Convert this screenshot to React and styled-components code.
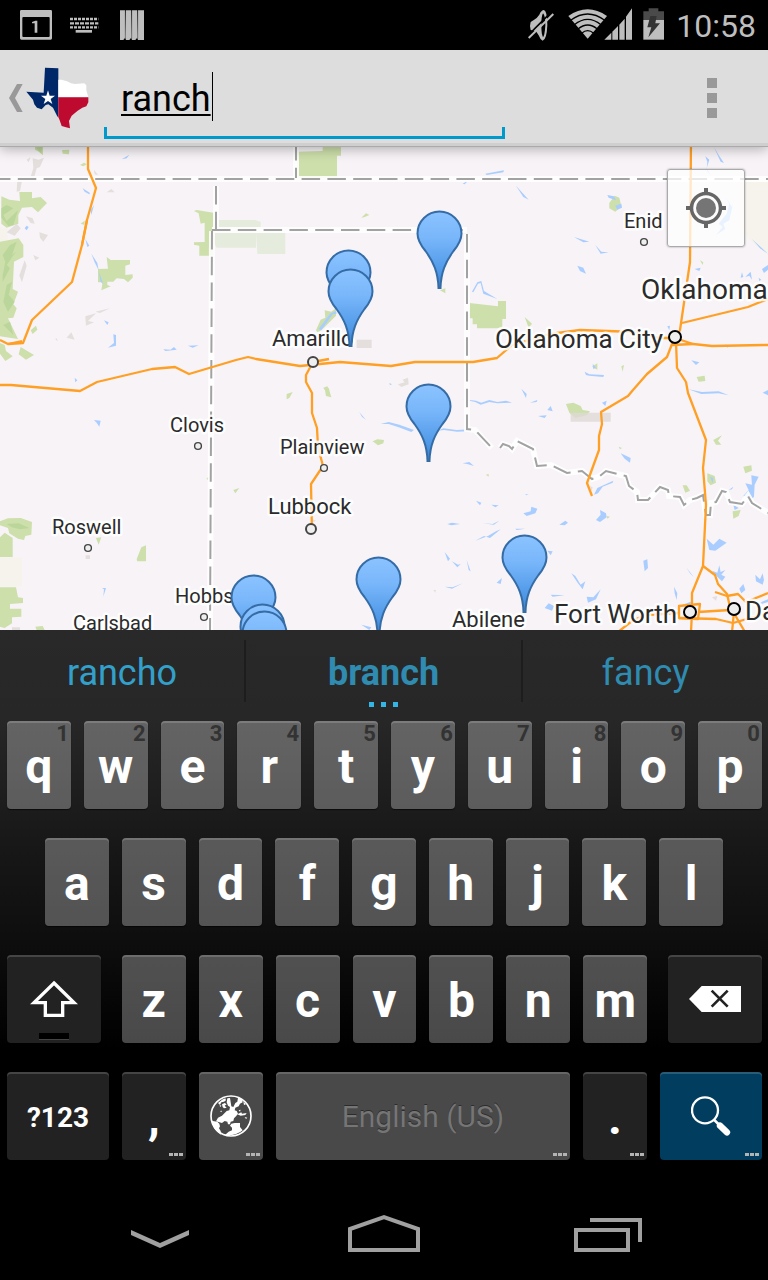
import { useState } from "react";
import styled, { createGlobalStyle } from "styled-components";

const hints = "1234567890";

const cities = [
  { name: "Enid", x: 624, y: 228, size: 20, dot: [644, 242, 3] },
  { name: "Clovis", x: 170, y: 432, size: 20, dot: [198, 446, 3] },
  { name: "Roswell", x: 52, y: 534, size: 20, dot: [88, 548, 3] },
  { name: "Hobbs", x: 175, y: 603, size: 20, dot: [204, 617, 3] },
  { name: "Plainview", x: 280, y: 454, size: 20, dot: [324, 468, 3] },
  { name: "Carlsbad", x: 73, y: 630, size: 20 },
  { name: "Abilene", x: 452, y: 627, size: 22 },
  { name: "Amarillo", x: 272, y: 346, size: 22, dot: [313, 362, 5] },
  { name: "Lubbock", x: 268, y: 514, size: 22, dot: [311, 529, 5] },
  { name: "Oklahoma City", x: 495, y: 348, size: 26, dot: [675, 337, 6] },
  { name: "Fort Worth", x: 554, y: 623, size: 26, dot: [690, 612, 6] },
  { name: "Dallas", x: 745, y: 620, size: 26, dot: [734, 609, 6] },
  { name: "Oklahoma", x: 641, y: 299, size: 28 },
];

const pins = [
  { x: 439, y: 210 },
  { x: 348, y: 249 },
  { x: 350, y: 268 },
  { x: 428, y: 383 },
  { x: 524, y: 534 },
  { x: 378, y: 556 },
  { x: 253, y: 574 },
  { x: 262, y: 603 },
  { x: 264, y: 610 },
];

const roads = [
  "M88 140V169L96 188L87 220L82 245L72 282L32 320L23 343L8 344L0 340",
  "M8 344L22 341M82 245L87 220",
  "M0 385H11L80 391L97 382L152 369L175 367L189 374L236 360L248 357L256 359L300 366L340 362L391 366L415 362H473L497 358L512 345L550 334L580 330L635 332L660 338L675 338L693 344L712 346L765 345H768",
  "M672 345L693 344M313 362L329 359",
  "M682 323L748 307L768 299",
  "M691 140L690 262L680 330L672 344L667 357L647 374L633 390L628 396L601 412L602 424L599 436V450L591 472L587 483L592 496",
  "M676 342L677 368L686 382L688 393L706 440L703 468L706 505L703 566L692 593V612L691 632",
  "M703 566L715 575L718 584L727 594L730 607L735 615L745 632",
  "M679 606L700 604L698 619L679 618ZM698 612L730 610",
  "M618 632L632 621L645 615L679 613M679 618L716 619L733 623L768 613",
  "M715 592L727 596L738 594L746 602L768 593M734 612L732 632",
  "M313 362L306 375V382L312 393V413L317 428L318 447L323 466L311 484L312 534",
];

const borders = [
  "M-8 179H768",
  "M296 142V178",
  "M216 186V230",
  "M212 231L210 630",
  "M212 230H467",
  "M467 234V429L475 430L492 448",
  "M500 448L503 444L509 446L512 449L517 441L533 449L537 466L551 465L567 473L582 471L592 479L600 476L606 471L621 475L626 476L629 486L637 492L638 500L648 500L660 487L668 490L669 496L680 497L684 505L690 500L697 498L703 495L706 515L710 515L711 503L716 502L722 491L726 492L730 502L742 504L748 496L752 503L768 513",
];

// terrain is split in tiles, each drawn at three units per pixel
const tiles = [
  {
    x: 0,
    y: 145,
    park: [
      "M105 3H129V31L116 20L105 14ZM186 15L208 14L207 28L188 26ZM240 60L252 53L261 58L250 64ZM58 141H96V160L122 156L141 174L114 202L96 186L66 188L55 210V236L20 248L4 236V154L28 164L60 168ZM0 290L56 280L70 300V336L42 350L38 432L54 440L40 478L50 490L40 518L24 520L54 582L0 574Z",
      "M0 594L14 600L18 618L38 634L16 648L0 626ZM62 606L102 630L78 644L56 628ZM92 556L108 542L112 554L98 567ZM320 336L332 345H390V358L376 362V390L398 388V398L384 412L372 402L350 400L340 410H322V420L332 424L304 436L308 412H294V372L324 371ZM582 198L590 195L640 203V332H598V302L582 299V292L614 291V233L602 236L596 205ZM242 236L254 227L254 240Z",
    ],
    pale: ["M652 225H768V250H640V240ZM640 262H768V308H650L640 290Z"],
    cream: ["M0 246L22 252V288L0 290Z"],
    ridge: [
      "M98 40L116 44L132 38L120 66L110 70L102 98L92 96L100 70ZM80 44L92 36L86 52ZM52 106L66 108L60 138L50 140ZM20 262L50 236L62 250L44 272ZM78 214L98 220L104 236L92 234ZM118 262L144 270L130 290L120 278ZM58 392L74 346L80 362L66 412ZM100 330L118 338L106 346ZM256 514L288 505L264 528L282 532L258 542ZM286 500L330 490L300 504ZM200 578L214 562L224 584ZM168 578L174 588L167 584ZM320 142L334 132L344 142ZM282 74L294 90L284 88Z",
    ],
    shade: ["M20 180L40 190L10 210L20 228L54 196L40 240L26 244L4 218V190ZM30 300L50 290L36 330L48 320L20 360L30 370L8 410V390L16 350L8 330ZM20 420L36 410L26 450L44 470L24 500L10 470ZM10 540L30 530L40 570ZM108 8L126 6L124 26Z"],
    water: ["M365 43L388 29L380 40ZM248 130L270 144L268 148L254 140ZM272 196L282 180L274 210ZM256 282L268 302L262 306ZM274 326L292 354L296 376L284 352ZM296 378L310 418L302 410ZM74 250L80 242L86 246L80 256ZM312 526L326 532L322 540ZM340 568L348 570L348 602L324 608L342 594ZM490 613L512 614L522 606L530 614L496 618ZM564 602L596 601L578 608ZM224 698L232 706L226 712Z"],
  },
  {
    x: 256,
    y: 145,
    park: ["M124 20L200 18V4H255V32H243V98H124ZM316 218L330 205L340 210L326 216ZM640 474L726 484V468H750V522H739V550H663V538H650V520H640ZM180 556L194 524L208 518L206 496L226 500L240 490V512L206 546L186 564ZM552 436L568 430L568 445ZM202 728L214 724L220 735H206Z"],
    pale: ["M0 226L14 230V250H0ZM0 263H88V327H4Z"],
    ridge: ["M302 584H347V609H302ZM440 704L456 698L458 718L436 726L426 718L446 712Z"],
    water: ["M188 552L222 506L240 498L242 506L230 508L196 556ZM688 86L744 76L742 82L692 90ZM620 116L638 106L626 118ZM400 714L408 718L402 720ZM648 440L664 412L676 408L684 438L724 462L682 446L674 414L666 416L652 442Z"],
  },
  {
    x: 512,
    y: 145,
    park: ["M292 174L308 152L322 158L328 184L310 200L292 190ZM38 516L60 536L50 548ZM240 665L256 655L256 674ZM554 696L578 692L580 708L560 710ZM328 664L336 660L332 680ZM564 346L574 352L572 360Z"],
    cream: ["M680 105H768V330L730 300L680 250Z"],
    water: ["M286 150L306 154L312 166L290 158ZM310 182L328 176L330 188L316 194ZM12 122L50 164L34 156ZM186 276L232 290L214 292ZM250 300L268 320L290 322L266 326ZM196 362L214 368L222 386L204 378ZM606 6L620 30L636 54L626 50L614 24ZM580 34L592 44L584 70L596 90L584 76L586 50ZM612 270L640 252L634 236L652 226L668 154L660 186L650 170L636 150L652 176L644 206L620 236L632 246L604 280ZM720 282L768 326L744 310ZM548 372L566 368L562 378ZM686 398L690 382L694 396ZM700 396L716 380L720 404L712 392ZM750 372L768 360V374L756 384ZM740 398L748 404L742 408ZM218 680L232 688L276 690L274 696L232 692L222 690ZM242 656L252 668L244 672ZM538 646L562 652L552 660ZM466 544L474 542L472 556ZM640 598L652 604L646 608Z"],
  },
  {
    x: 0,
    y: 388,
    park: ["M0 400L24 391L62 390L96 402L94 440L76 444L72 456L54 452L28 436L24 420L0 412ZM0 448L14 434L38 450V507H0ZM0 598H48L54 628L69 630V645L30 648V662H64V686L36 688V706L14 720L0 716ZM106 716L128 714L134 726H110ZM410 514L424 478L438 472V520H412ZM288 450L304 448L296 470ZM286 422L300 402L302 420ZM700 306L718 300L706 316ZM620 270L632 266L622 276Z"],
    cream: ["M0 508H66V596H0Z"],
    ridge: ["M257 502L270 502V513H257ZM36 718H60V726H36Z"],
    shade: ["M20 408L56 406L88 420L60 424L36 418Z"],
    water: ["M282 96L302 98L298 116L290 104ZM306 600L318 600L310 626L312 604Z"],
  },
  {
    x: 256,
    y: 388,
    park: ["M92 18L110 12L100 30L92 34ZM206 0H218L226 28L210 24ZM350 160L364 154L384 156L382 166L366 172ZM690 260L698 258L698 266Z"],
    ridge: ["M532 606L540 606L538 614ZM166 392L180 398L168 404Z"],
    water: ["M374 108L398 102L430 110L474 126L466 132L428 118L398 108ZM546 128L562 121L602 126L640 124L636 130L604 131L564 126ZM620 34L660 38L676 44L700 36L724 42L750 38L768 44L724 46L700 42L674 50L658 42ZM620 226L640 222L654 234L634 228ZM660 338L676 344L672 352ZM706 350L728 352L718 358ZM574 408L588 404L612 408L586 412ZM680 406L710 408L730 398L714 410ZM658 458L684 444L702 450L734 424L720 430L696 444ZM566 492L582 512L576 520ZM588 520L606 530L614 528L604 538ZM632 516L644 550L638 546ZM566 596L590 598L620 586L588 602ZM722 584L738 570L734 588ZM316 710L346 718L340 726ZM310 72L330 96L318 86Z"],
  },
  {
    x: 512,
    y: 388,
    park: ["M162 48L184 44L206 54L212 66L234 70L224 82L190 90L172 74ZM604 156L630 142L618 158L628 170L612 170ZM694 236L718 232L720 248L700 256ZM586 256L608 264L612 284L596 292L586 280ZM512 292L524 292L534 308L520 314ZM662 370L686 366L680 384L664 392ZM320 176L330 180L324 184ZM284 384L294 386L286 392Z"],
    ridge: ["M176 74H296V101H176ZM600 628L616 624L612 638ZM234 294L242 298L238 310Z"],
    water: ["M28 2L44 18L42 30ZM54 44L76 36L74 42ZM78 84L104 82L98 90ZM106 66L116 54L122 70ZM270 44L284 38L280 54ZM196 98L212 118L204 108ZM326 196L356 210L354 224L338 212ZM34 376L56 370L58 356L76 362L70 376L44 384ZM142 410L160 398L168 404L158 412ZM252 396L266 380L264 366L282 376L284 388L264 402ZM246 320L256 300L304 278L302 284L272 296L258 316ZM394 518L406 514L408 540L398 550ZM584 452L604 470L622 452L644 464L610 488L592 486ZM600 548L616 554L622 532L626 552L640 546L628 560L640 566L630 580L616 566ZM730 560L744 574L752 556L756 576L752 590L732 580ZM524 540L546 568L534 556ZM486 596L496 616L494 636L488 616ZM178 556L190 564L206 590L220 580L212 604L198 586ZM224 626L244 628L266 604L252 634L228 644ZM98 660L110 646L126 654L120 668ZM116 620L158 622L122 626ZM740 646L768 634V642L748 648ZM512 650L540 640L526 660ZM530 4L570 12L620 10L650 22L620 16L568 18ZM694 324L710 306L700 286L720 290L718 262L740 266L728 290L726 326L714 340L706 326ZM650 306L664 296L660 304ZM636 324L654 342L686 346L652 348ZM106 488L122 490L116 502ZM10 422L40 422L14 426ZM40 318L50 320L42 322ZM682 602L694 588L700 606L688 616ZM752 14L768 6V22ZM664 350L680 360L668 366ZM594 266L604 270L602 286Z"],
  },
];

const landColors = {
  cream: "#f6f3ec",
  pale: "#e6ecdd",
  park: "#cddfab",
  shade: "#bbd69a",
  ridge: "#dedad6",
  water: "#a9cdff",
};

const Terrain = () => (
  <>
    {tiles.map((tile) => (
      <g key={`${tile.x}-${tile.y}`} transform={`translate(${tile.x} ${tile.y}) scale(0.3333)`}>
        {Object.keys(landColors).map((kind) =>
          (tile[kind] || []).map((d) => (
            <path key={d} d={d} fill={landColors[kind]} opacity={kind === "ridge" ? 0.8 : 1} />
          ))
        )}
      </g>
    ))}
  </>
);

const MapDrawing = () => (
  <MapSvg viewBox="0 147 768 483" role="img" aria-label="Map">
    <rect x="0" y="147" width="768" height="483" fill="#f7f3f7" />
    <Terrain />
    <g fill="none" stroke="#fff" strokeWidth="6" opacity="0.9">
      {borders.map((d) => (
        <path key={d} d={d} />
      ))}
    </g>
    <g fill="none" stroke="#a3a2a2" strokeWidth="2" strokeDasharray="18.500 7.300">
      {borders.map((d) => (
        <path key={d} d={d} />
      ))}
    </g>
    <g fill="none" stroke="#ff9f24" strokeWidth="2.3" strokeLinejoin="round">
      {roads.map((d) => (
        <path key={d} d={d} />
      ))}
    </g>
    {cities.map(({ name, x, y, size, dot }) => (
      <g key={name}>
        <CityName x={x} y={y} fontSize={size}>
          {name}
        </CityName>
        {dot && (
          <circle
            cx={dot[0]}
            cy={dot[1]}
            r={dot[2] === 3 ? 3.4 : dot[2]}
            fill="#eee"
            stroke={dot[2] === 6 ? "#000" : "#444"}
            strokeWidth={dot[2] === 3 ? 1.4 : 2}
          />
        )}
      </g>
    ))}
  </MapSvg>
);

const Pin = ({ x, y }) => (
  <PinButton $x={x} $y={y} aria-label="Place">
    <svg width="47" height="79" viewBox="0 0 47 79">
      <defs>
        <linearGradient id="pin" x1="0" y1="0" x2="0" y2="1">
          <stop offset="0" stopColor="#8bc3ff" />
          <stop offset="0.35" stopColor="#78b6fa" />
          <stop offset="0.8" stopColor="#4d97e6" />
          <stop offset="1" stopColor="#3b7fc8" />
        </linearGradient>
      </defs>
      <path
        d="M22.5 78C22 62 17.5 52 9.500 41C4.5 35 1.5 30 1.5 23.500A22 22 0 0 1 45.5 23.500C45.5 30 42.5 35 37.5 41C29.5 52 25 62 24.500 78Z"
        fill="url(#pin)"
        stroke="#356ca6"
        strokeWidth="2"
      />
    </svg>
  </PinButton>
);

const StatusIcons = () => (
  <>
    <svg width="124" height="32" viewBox="60 27 372 96" fill="#bebebe">
      <path
        fillRule="evenodd"
        d="M64 30H152Q156 30 156 34V115Q156 119 152 119H64Q60 119 60 115V34Q60 30 64 30ZM70 51Q67 51 67 54V108Q67 111 70 111H146Q149 111 149 108V54Q149 51 146 51Z"
      />
      <path d="M96 66L106 62H112V98H104V70H96Z" />
      <path
        fill="none"
        stroke="#bebebe"
        strokeWidth="7"
        strokeDasharray="9 3"
        d="M210 57H295M210 82H295"
      />
      <path fill="none" stroke="#bebebe" strokeWidth="7" strokeDasharray="12 3" d="M210 70H295" />
      <path d="M227 90H276V98H227Z" />
      <path d="M360 31H375V114L370 120H360ZM378 31H393V114L388 120H378L375 112ZM396 31H411V114L406 120H396L393 112ZM414 31H432V120H414L411 112Z" />
      <path d="M376 31V116M395 31V116M413 31V116" stroke="#555" strokeWidth="2" />
    </svg>
    <StatusSpace />
    <svg width="136" height="34" viewBox="432 24 408 102" fill="#bebebe">
      <path d="M440 66Q450 60 458 54L466 44Q472 30 480 30Q490 34 490 76Q488 120 476 122Q468 118 464 106L456 94L440 90Q436 78 440 66Z" />
      <path d="M477 40Q484 46 484 76Q482 108 477 112Q472 104 472 76Q472 48 477 40Z" fill="#000" />
      <path d="M430 108L504 34" stroke="#000" strokeWidth="5" />
      <path d="M434 114L508 42" stroke="#bebebe" strokeWidth="6" />
      <path d="M611 116L553 48Q611 8 669 48Z" />
      <path
        d="M560 61Q611 23 662 61M571 74Q611 42 651 74M582 87Q611 63 640 87M593 100Q611 84 629 100"
        fill="none"
        stroke="#000"
        strokeWidth="4"
      />
      <path d="M661 119L682 98V119ZM685 95L702 78V119H685ZM706 74L722 56V119H706ZM726 50L744 25V119H726Z" />
      <path d="M778 34H794V25H823V34H840V60H778Z" fill="#4a4a4a" />
      <path d="M778 60H840V119H778Z" />
      <path d="M799 48H818L814 70H828L793 112L802 82H790Z" fill="#333" />
    </svg>
  </>
);

const Texas = () => (
  <svg width="64" height="62" viewBox="74 200 192 186">
    <path
      d="M134 202L174 204V352L170 346L158 322L144 312L136 314L124 327L110 322L102 312L98 298L78 274L130 277Z"
      fill="#002868"
    />
    <path d="M174 238L184 238L200 243L212 249L224 251L252 249L258 255L258 270L264 291H174Z" fill="#fff" />
    <path
      d="M174 291H264V306L258 318L246 322L232 331L214 346L206 362L209 384L197 381L184 377L178 360L174 350Z"
      fill="#bf0a30"
    />
    <path
      d="M143 270L148 286H164L151 296L156 311L143 302L130 311L135 296L122 286H138Z"
      fill="#fff"
    />
  </svg>
);

const Globe = () => (
  <svg width="42" height="42" viewBox="0 0 126 126" fill="#fff">
    <circle cx="63" cy="63" r="60" fill="none" stroke="#fff" strokeWidth="5" />
    <path d="M3 72L8 78L22 80L28 86L30 94L27 100L32 108L34 120Q8 106 3 72Z" />
    <path d="M18 79L24 68L36 62L44 54L50 48L58 46L60 36L54 32L50 22L52 10L60 9L64 34L70 36L76 24L82 20L84 8L96 12L98 22L90 26L86 34L76 38L74 46L80 48L84 56L78 64L72 70L70 78L62 80L60 88L54 88L52 80L44 78L36 84Z" />
    <path d="M64 86L74 84L90 84L90 96L98 106Q78 124 44 121L56 110L66 106L66 98L60 92Z" />
    <path d="M24 24L36 14L46 10L48 16L42 20L34 22L30 30ZM36 28L44 24L50 28L44 32L50 38L42 40L38 36ZM28 32L34 30L32 36ZM30 48L36 47L34 52ZM82 58L94 52L96 56L110 54L106 60L92 62ZM86 46L92 44L90 50ZM104 66L112 68L108 72ZM100 20L108 28L102 30Z" />
  </svg>
);

const LetterKey = ({ label, hint, onPress }) => (
  <Key onClick={() => onPress(label)}>
    {hint && <Hint>{hint}</Hint>}
    {label}
  </Key>
);

const App = () => {
  const [query, setQuery] = useState("ranch");
  const press = (letter) => setQuery(query + letter);

  return (
    <Screen>
      <GlobalStyle />
      <StatusBar>
        <StatusIcons />
        <Clock>10:58</Clock>
      </StatusBar>
      <ActionBar>
        <UpButton aria-label="Navigate up">
          <svg width="14" height="28" viewBox="26 252 42 84">
            <path d="M50 252H67L44 294L67 336H50L26 294Z" fill="#999" />
          </svg>
          <Texas />
        </UpButton>
        <SearchField>
          <SearchInput
            aria-label="Search"
            value={query}
            onChange={(e) => setQuery(e.target.value)}
          />
          {query === "ranch" && <Caret />}
        </SearchField>
        <OverflowButton aria-label="More options">
          <i />
          <i />
          <i />
        </OverflowButton>
      </ActionBar>
      <MapArea>
        <MapDrawing />
        {pins.map((pin) => (
          <Pin key={`${pin.x}-${pin.y}`} {...pin} />
        ))}
        <LocateButton aria-label="My location">
          <svg width="40" height="40" viewBox="0 0 40 40">
            <circle cx="20" cy="20" r="14.500" fill="none" stroke="#666" strokeWidth="3.500" />
            <circle cx="20" cy="20" r="10" fill="#757575" />
            <path d="M20 0V6M20 34V40M0 20H6M34 20H40" stroke="#666" strokeWidth="4" />
          </svg>
        </LocateButton>
      </MapArea>
      <Keyboard>
        <Suggestions>
          <Suggestion onClick={() => setQuery("rancho")}>rancho</Suggestion>
          <Suggestion $best onClick={() => setQuery("branch")}>
            branch
            <MoreDots>
              <i />
              <i />
              <i />
            </MoreDots>
          </Suggestion>
          <Suggestion $dim onClick={() => setQuery("fancy")}>
            fancy
          </Suggestion>
        </Suggestions>
        <KeyRow $columns="repeat(10, 1fr)">
          {"qwertyuiop".split("").map((letter, i) => (
            <LetterKey key={letter} label={letter} hint={hints[i]} onPress={press} />
          ))}
        </KeyRow>
        <KeyRow $columns="repeat(9, 1fr)" $inset>
          {"asdfghjkl".split("").map((letter) => (
            <LetterKey key={letter} label={letter} onPress={press} />
          ))}
        </KeyRow>
        <KeyRow $columns="102fr repeat(7, 64fr) 102fr">
          <ShiftKey $dark aria-label="Shift">
            <svg width="48" height="38" viewBox="90 122 144 114">
              <path
                d="M162 131L222 190H188V228H136V190H102Z"
                fill="none"
                stroke="#fff"
                strokeWidth="10"
              />
            </svg>
          </ShiftKey>
          {"zxcvbnm".split("").map((letter) => (
            <LetterKey key={letter} label={letter} onPress={press} />
          ))}
          <DeleteKey $dark aria-label="Delete" onClick={() => setQuery(query.slice(0, -1))}>
            <svg width="52" height="26" viewBox="912 141 156 78">
              <path d="M912 180L950 141H1068V219H950Z" fill="#fff" />
              <path d="M980 155L1028 203M1028 155L980 203" stroke="#222" strokeWidth="8" />
            </svg>
          </DeleteKey>
        </KeyRow>
        <KeyRow $columns="102fr 64fr 64fr 294fr 64fr 102fr">
          <Key $dark $small>
            ?123
          </Key>
          <Key $dark onClick={() => press(",")}>
            ,<KeyDots />
          </Key>
          <Key aria-label="Switch language">
            <Globe />
            <KeyDots />
          </Key>
          <SpaceKey onClick={() => press(" ")}>
            English (US)
            <KeyDots />
          </SpaceKey>
          <Key $dark onClick={() => press(".")}>
            .<KeyDots />
          </Key>
          <SearchKey aria-label="Search">
            <svg width="40" height="40" viewBox="920 470 120 120">
              <circle cx="962" cy="513" r="39" fill="none" stroke="#fff" strokeWidth="7" />
              <path d="M988 540L1002 554" stroke="#fff" strokeWidth="8" />
              <path
                d="M1007 559L1028 579"
                stroke="#fff"
                strokeWidth="19"
                strokeLinecap="round"
              />
            </svg>
            <KeyDots />
          </SearchKey>
        </KeyRow>
      </Keyboard>
      <NavBar>
        <NavButton aria-label="Hide keyboard">
          <svg width="60" height="40" viewBox="0 0 60 40">
            <path d="M1 17V22L30 35L59 22V17L30 30Z" fill="#a0a0a0" />
          </svg>
        </NavButton>
        <NavButton aria-label="Home">
          <svg width="72" height="40" viewBox="0 0 72 40" fill="none" stroke="#a0a0a0" strokeWidth="4">
            <path d="M2 37V16L36 4L70 16V37Z" />
          </svg>
        </NavButton>
        <NavButton aria-label="Recent apps">
          <svg width="68" height="40" viewBox="0 0 68 40" fill="none" stroke="#a0a0a0" strokeWidth="4">
            <path d="M2 17H54V37H2ZM16 7H66V29" />
          </svg>
        </NavButton>
      </NavBar>
    </Screen>
  );
};
export default App;

const GlobalStyle = createGlobalStyle`
  * {
    box-sizing: border-box;
  }
  body {
    margin: 0;
    background-color: #000;
    font-family: Roboto, "Liberation Sans", sans-serif;
  }
  button {
    border: none;
    padding: 0;
    background: none;
    font-family: inherit;
    cursor: pointer;
  }
  svg {
    display: block;
  }
`;
const Screen = styled.div`
  display: flex;
  flex-direction: column;
  width: 100%;
`;
const StatusBar = styled.div`
  display: flex;
  align-items: center;
  height: 50px;
  padding: 0 12px 0 20px;
  background-color: #000;
`;
const StatusSpace = styled.div`
  flex: 1;
`;
const Clock = styled.span`
  margin-left: 12px;
  padding-top: 2px;
  color: #bebebe;
  font-size: 32px;
`;
const ActionBar = styled.header`
  display: flex;
  align-items: center;
  height: 97px;
  padding: 0 51px 0 9px;
  background-color: #ddd;
  border-bottom: 1px solid #aaa;
  box-shadow: inset 0 -3px 0 #cfcfcf, 0 2px 12px rgba(0, 0, 0, 0.3);
  position: relative;
  z-index: 1;
`;
const UpButton = styled.button`
  display: flex;
  align-items: center;
  gap: 2px;
`;
const SearchField = styled.div`
  position: relative;
  flex: 0 1 401px;
  margin-left: 15px;
  align-self: stretch;
  padding: 21px 17px 0;

  &::after {
    content: "";
    position: absolute;
    left: 0;
    right: 0;
    bottom: 7px;
    height: 9px;
    border: 3px solid #0099cc;
    border-top: none;
    pointer-events: none;
  }
`;
const SearchInput = styled.input`
  width: 100%;
  height: 56px;
  padding: 0;
  border: none;
  outline: none;
  background: transparent;
  color: #000;
  font-family: inherit;
  font-size: 36px;
  text-decoration: underline;
  text-decoration-thickness: 2px;
  text-underline-offset: 3px;
  text-decoration-skip-ink: none;
`;
const Caret = styled.span`
  position: absolute;
  left: 108px;
  top: 22px;
  width: 1px;
  height: 49px;
  background-color: #000;
`;
const OverflowButton = styled.button`
  display: flex;
  flex-direction: column;
  gap: 5px;
  margin-left: auto;

  i {
    width: 10px;
    height: 10px;
    background-color: #999;
  }
`;
const MapArea = styled.main`
  position: relative;
  overflow: hidden;
`;
const MapSvg = styled.svg`
  width: 100%;
  height: auto;
`;
const CityName = styled.text`
  fill: #2b2b2b;
  stroke: rgba(255, 255, 255, 0.85);
  stroke-width: 5px;
  stroke-linejoin: round;
  paint-order: stroke;
`;
const PinButton = styled.button`
  position: absolute;
  left: ${(props) => props.$x - 23}px;
  top: ${(props) => props.$y - 147}px;
`;
const LocateButton = styled.button`
  position: absolute;
  top: 22px;
  right: 23px;
  display: flex;
  align-items: center;
  justify-content: center;
  width: 78px;
  height: 78px;
  border: 1px solid #aaa;
  border-radius: 3px;
  background-color: rgba(255, 255, 255, 0.75);
  box-shadow: 0 0 2px rgba(0, 0, 0, 0.4);
`;
const Keyboard = styled.section`
  display: flex;
  flex-direction: column;
  gap: 29px;
  padding-bottom: 24px;
  background: linear-gradient(#292929, #272727 90px, #181818 210px, #101010 290px, #000 420px);
`;
const Suggestions = styled.div`
  display: grid;
  grid-template-columns: 244fr 277fr 247fr;
  height: 62px;
  margin-top: 10px;
  margin-bottom: -10px;
`;
const Suggestion = styled.button`
  position: relative;
  padding-top: 3px;
  color: ${(props) => (props.$best || props.$dim ? "#2f8bb0" : "#33a0cb")};
  font-size: 36px;
  font-weight: ${(props) => (props.$best ? 700 : 400)};

  & + & {
    border-left: 2px solid #1d1d1d;
  }
`;
const MoreDots = styled.span`
  position: absolute;
  left: 0;
  right: 0;
  bottom: -5px;
  display: flex;
  justify-content: center;
  gap: 7px;

  i {
    width: 5px;
    height: 5px;
    background-color: #33b5e5;
  }
`;
const KeyRow = styled.div`
  display: grid;
  grid-template-columns: ${(props) => props.$columns};
  gap: 13px;
  padding: ${(props) => (props.$inset ? "0 45px" : "0 6px 0 7px")};
`;
const Key = styled.button`
  position: relative;
  display: flex;
  align-items: center;
  justify-content: center;
  min-width: 0;
  height: 88px;
  padding-top: 3px;
  border-radius: 4px;
  background-color: ${(props) => (props.$dark ? "#222" : "rgba(243, 243, 243, 0.3)")};
  box-shadow: inset 0 2px 0 rgba(255, 255, 255, 0.16), 0 1px 1px rgba(0, 0, 0, 0.6);
  color: #fff;
  font-size: ${(props) => (props.$small ? 28 : 48)}px;
  font-weight: 700;

  svg {
    margin-top: -3px;
  }
`;
const Hint = styled.span`
  position: absolute;
  top: 1px;
  right: 2px;
  color: #333;
  font-size: 22px;
  line-height: 24px;
`;
const KeyDots = styled.span`
  position: absolute;
  right: 3px;
  bottom: 4px;
  width: 14px;
  height: 3px;
  background: repeating-linear-gradient(90deg, #b4b4b4 0 4px, transparent 4px 5px);
`;
const ShiftKey = styled(Key)`
  margin-right: 8px;

  &::after {
    content: "";
    position: absolute;
    bottom: 3px;
    width: 30px;
    height: 6px;
    border-bottom: 1px solid #444;
    background-color: #000;
  }
`;
const DeleteKey = styled(Key)`
  margin-left: 8px;
`;
const SpaceKey = styled(Key)`
  padding-top: 0;
  color: #757575;
  font-size: 30px;
  font-weight: 400;
  text-shadow: 0 -1px 0 #2c2c2c;
`;
const SearchKey = styled(Key)`
  background-color: #003d5e;
`;
const NavBar = styled.nav`
  display: grid;
  grid-template-columns: repeat(3, 1fr);
  height: 96px;
  padding: 2px 48px 0;
  background-color: #000;
`;
const NavButton = styled.button`
  display: flex;
  align-items: center;
  justify-content: center;
`;
